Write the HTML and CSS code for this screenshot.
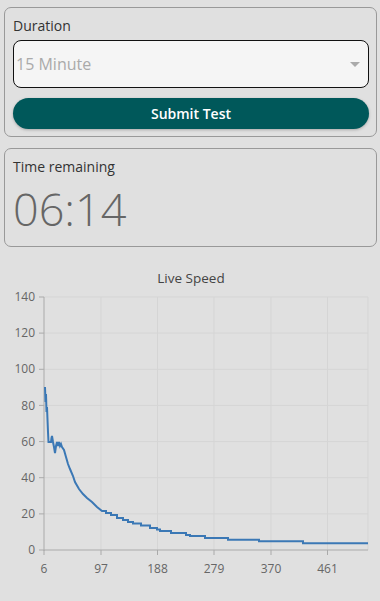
FILE: index.html
```html
<!DOCTYPE html>
<html lang="en">
<head>
  <meta charset="UTF-8">
  <meta name="viewport" content="width=device-width, initial-scale=1.0">
  <title>Speed Test</title>
  <link rel="stylesheet" href="styles.css">
</head>
<body>
  <div class="page">

    <!-- DURATION -->
    <div class="card">
      <div class="card-label">Duration</div>
      <div class="select-box">
        <span class="select-value">15 Minute</span>
        <span class="select-arrow"></span>
      </div>
      <button class="submit-btn">Submit Test</button>
    </div>

    <!-- TIMER -->
    <div class="card timer-card">
      <div class="card-label">Time remaining</div>
      <div class="timer">06:14</div>
    </div>

    <!-- CHART -->
    <svg class="chart" width="380" height="330" viewBox="0 256 380 330">
      <text class="chart-title" x="191" y="281">Live Speed</text>

      <g class="grid">
        <line x1="44" y1="295" x2="368" y2="295"/>
        <line x1="44" y1="331.1" x2="368" y2="331.1"/>
        <line x1="44" y1="367.3" x2="368" y2="367.3"/>
        <line x1="44" y1="403.4" x2="368" y2="403.4"/>
        <line x1="44" y1="439.6" x2="368" y2="439.6"/>
        <line x1="44" y1="475.7" x2="368" y2="475.7"/>
        <line x1="44" y1="511.9" x2="368" y2="511.9"/>
        <line x1="101" y1="295" x2="101" y2="548"/>
        <line x1="157.5" y1="295" x2="157.5" y2="548"/>
        <line x1="214" y1="295" x2="214" y2="548"/>
        <line x1="271" y1="295" x2="271" y2="548"/>
        <line x1="327.5" y1="295" x2="327.5" y2="548"/>
        <line x1="368" y1="295" x2="368" y2="548"/>
      </g>

      <g class="axis">
        <line x1="44" y1="295" x2="44" y2="549"/>
        <line x1="44" y1="548" x2="368" y2="548"/>
        <line x1="39" y1="295" x2="44" y2="295"/>
        <line x1="39" y1="331.1" x2="44" y2="331.1"/>
        <line x1="39" y1="367.3" x2="44" y2="367.3"/>
        <line x1="39" y1="403.4" x2="44" y2="403.4"/>
        <line x1="39" y1="439.6" x2="44" y2="439.6"/>
        <line x1="39" y1="475.7" x2="44" y2="475.7"/>
        <line x1="39" y1="511.9" x2="44" y2="511.9"/>
        <line x1="39" y1="548" x2="44" y2="548"/>
        <line x1="44" y1="548" x2="44" y2="553"/>
        <line x1="101" y1="548" x2="101" y2="553"/>
        <line x1="157.5" y1="548" x2="157.5" y2="553"/>
        <line x1="214" y1="548" x2="214" y2="553"/>
        <line x1="271" y1="548" x2="271" y2="553"/>
        <line x1="327.5" y1="548" x2="327.5" y2="553"/>
      </g>

      <g class="y-labels">
        <text x="35" y="299">140</text>
        <text x="35" y="335">120</text>
        <text x="35" y="371">100</text>
        <text x="35" y="408">80</text>
        <text x="35" y="444">60</text>
        <text x="35" y="480">40</text>
        <text x="35" y="516">20</text>
        <text x="35" y="552">0</text>
      </g>

      <g class="x-labels">
        <text x="44" y="571">6</text>
        <text x="101" y="571">97</text>
        <text x="157.5" y="571">188</text>
        <text x="214" y="571">279</text>
        <text x="271" y="571">370</text>
        <text x="327.5" y="571">461</text>
      </g>

      <path class="speed-line" d="M45,385 L45.5,400 L46,392 L46.5,410 L47,405 L48,430 L48.5,440 L51,440 L51.5,436 L52,434 L53,440 L54,445 L55,451 L56,444 L57,440 L58,444 L59,440 L60,444 L61,442 L62,445 L64,448 L66,455 L68,462 L70,467 L73,474 L75,480 L79,487 L83,492 L87,496 L92,500 L97,505 L102,509 H106 V511 H111 V513 H117 V516 H123 V518 H128 V520 H133 V521.5 H141 V523.5 H150 V526 H157 V527.5 H160 V529 H171 V531 H186 V533 H190 V534 H205 V536 H228 V537.7 H259 V539.3 H303 V541.3 H368"/>
    </svg>

  </div>
</body>
</html>
```

FILE: styles.css
```css
/* VARIABLES */
:root {
  --bg-color: #e0e0e0;
  --text-color: #333;
  --muted-color: #666;
  --primary-color: #00585a;
  --line-color: #3b78b5;
  --font-family: "Open Sans", "Noto Sans", sans-serif;
}

* {
  box-sizing: border-box;
}

body {
  margin: 0;
  background-color: var(--bg-color);
  font-family: var(--font-family);
  color: var(--text-color);
}

.page {
  display: flex;
  flex-direction: column;
  gap: 11px;
  padding: 7px 3px 0 4px;
}

/* CARDS */
.card {
  display: flex;
  flex-direction: column;
  border: 1px solid #999;
  border-radius: 7px;
  padding: 8px 7px 7px 8px;
}

.card-label {
  font-size: 14px;
  line-height: 20px;
  margin-bottom: 4px;
}

/* SELECT */
.select-box {
  display: flex;
  align-items: center;
  justify-content: space-between;
  height: 48px;
  padding: 0 8px 0 2px;
  background-color: #f5f5f5;
  border: 1px solid #111;
  border-radius: 8px;
}

.select-value {
  font-size: 16px;
  color: #aaa;
}

.select-arrow {
  width: 0;
  height: 0;
  border-left: 5px solid transparent;
  border-right: 5px solid transparent;
  border-top: 5px solid #aaa;
}

/* BUTTON */
.submit-btn {
  margin-top: 10px;
  height: 31px;
  border: none;
  border-radius: 16px;
  background-color: var(--primary-color);
  color: #fff;
  font-family: var(--font-family);
  font-size: 14px;
  font-weight: 600;
  box-shadow: 0 1px 3px rgba(0, 0, 0, 0.25);
}

/* TIMER */
.timer-card {
  padding-bottom: 9px;
}

.timer {
  font-size: 45px;
  font-weight: 300;
  line-height: 56px;
  color: var(--muted-color);
}

/* CHART */
.chart {
  display: block;
  margin-left: -4px;
}

.chart text {
  font-family: var(--font-family);
}

.chart-title {
  font-size: 13.5px;
  fill: #444;
  text-anchor: middle;
}

.grid line {
  stroke: #d5d5d5;
  stroke-width: 1;
}

.axis line {
  stroke: #aaa;
  stroke-width: 1;
}

.y-labels text {
  font-size: 12px;
  fill: var(--muted-color);
  text-anchor: end;
}

.x-labels text {
  font-size: 12px;
  fill: var(--muted-color);
  text-anchor: middle;
}

.speed-line {
  fill: none;
  stroke: var(--line-color);
  stroke-width: 2;
}
```
